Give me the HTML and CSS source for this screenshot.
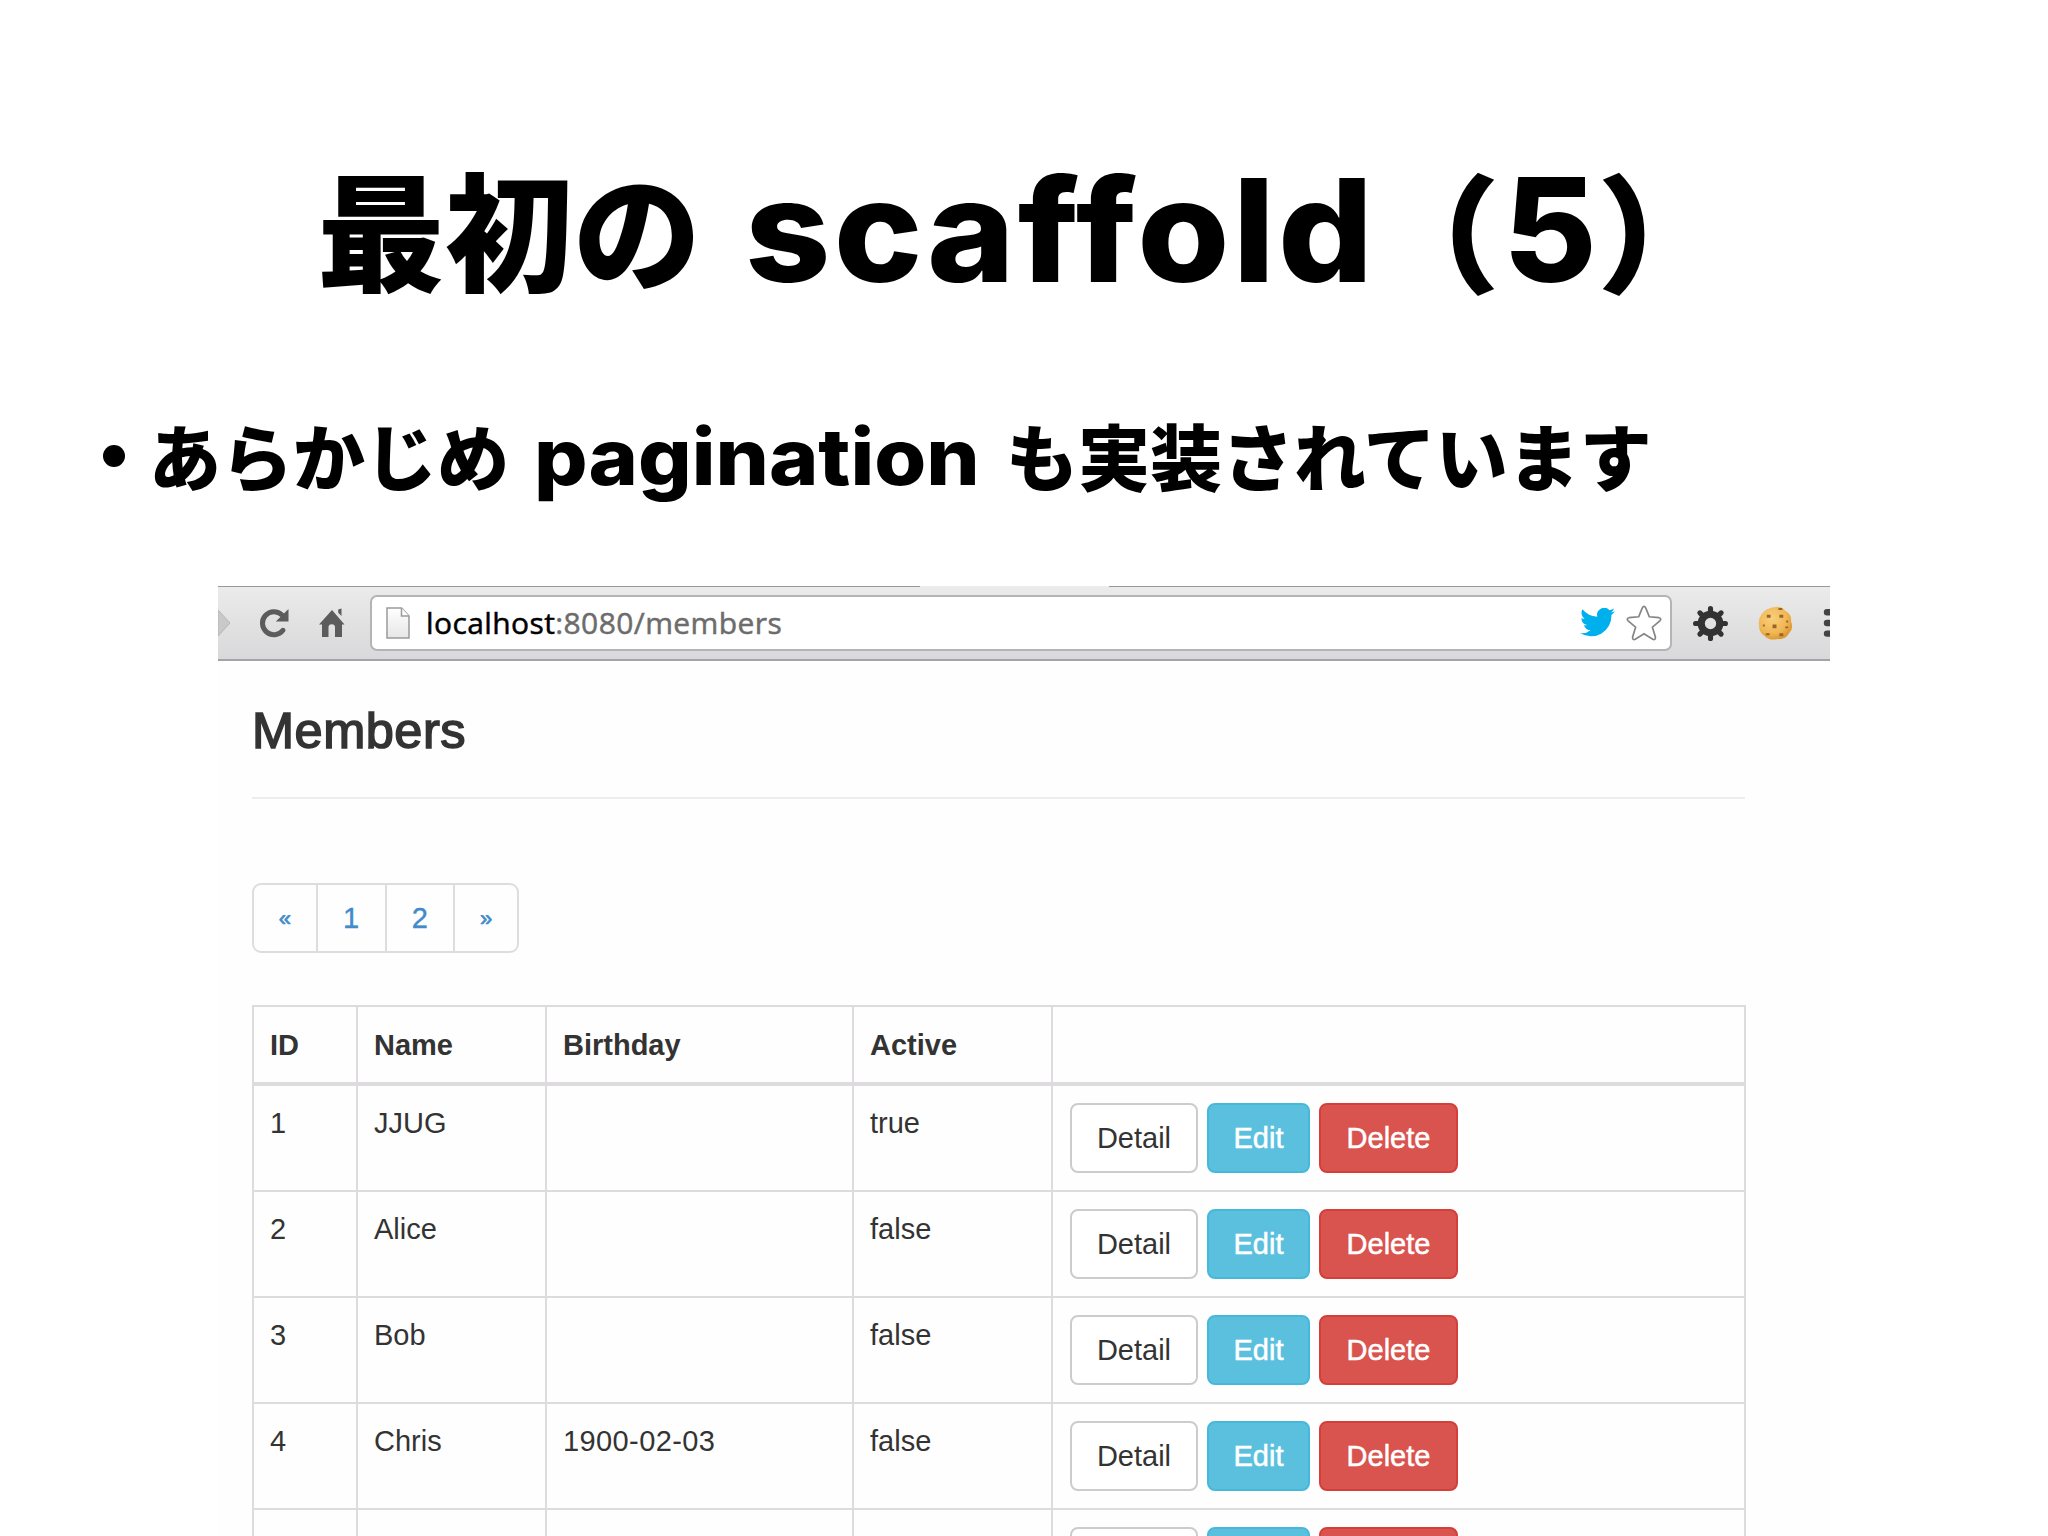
FILE: index.html
```html
<!DOCTYPE html>
<html lang="ja">
<head>
<meta charset="utf-8">
<title>最初の scaffold（5）</title>
<link rel="stylesheet" href="styles.css">
</head>
<body>
<main class="slide">
  <h1 class="title"><span class="title-jp">最初の</span><span class="title-en">scaffold</span><span class="paren">（</span><span class="title-num">5</span><span class="paren">）</span></h1>
  <ul class="bullets">
    <li class="bullet"><span class="dot"></span><span class="kana kana-lead">あらかじめ</span><span class="latin">pagination</span><span class="kana">も実装されています</span></li>
  </ul>
  <section class="browser">
    <header class="toolbar">
      <svg class="forward" viewBox="0 0 13 30"><path d="M0 2 12 15 0 28Z" fill="#c9c9c9" stroke="#b5b5b5"/></svg>
      <svg class="reload" viewBox="0 0 30 30"><path d="M24 22.300A11.500 11.500 0 1 1 23 7" fill="none" stroke="#5c5c5c" stroke-width="5" stroke-linecap="round"/><path d="M29.500 1V13.600H16.800Z" fill="#5c5c5c"/></svg>
      <svg class="home" viewBox="0 0 26 30"><path d="M13 2 0 16.500H3V29H9.500V19.500a3 3 0 0 1 6.500 0V29H23V16.500H25.500L13 2ZM19.200 1.600 22.500 .500V8L19.200 4.800Z" fill="#5c5c5c"/></svg>
      <div class="address">
        <svg class="page-icon" viewBox="0 0 24 32"><defs><linearGradient id="sheet" x2="0" y2="1"><stop stop-color="#fff"/><stop offset="1" stop-color="#e6e6e6"/></linearGradient></defs><path d="M1 1H15.500L23 9V31H1Z" fill="url(#sheet)" stroke="#9b9b9b" stroke-width="1.500"/><path d="M15.500 1V9H23" fill="#fff" stroke="#9b9b9b" stroke-width="1.500"/></svg>
        <span class="url"><b class="host">localhost</b>:8080/members</span>
        <svg class="bird" viewBox="1 3 22 18"><path d="M23 4.960a9 9 0 0 1-2.600.710 4.500 4.500 0 0 0 1.980-2.490 9 9 0 0 1-2.860 1.090 4.500 4.500 0 0 0-7.680 4.100A12.800 12.800 0 0 1 2.560 3.670a4.500 4.500 0 0 0 1.390 6.010 4.500 4.500 0 0 1-2.040-.560v.060a4.500 4.500 0 0 0 3.610 4.410 4.500 4.500 0 0 1-2.030.080 4.500 4.500 0 0 0 4.210 3.130A9 9 0 0 1 1 18.660 12.800 12.800 0 0 0 20.740 7.290 9 9 0 0 0 23 4.960Z" fill="#00b0ed"/></svg>
        <svg class="star" viewBox="0 0 36 36"><path d="M16.200 3.200Q18 -.500 19.800 3.200L23.300 11.800 33 12.700Q36 13.500 33.800 15.800L26.400 22.200 29.400 32Q29.600 35.400 26.700 34.300L18 28.800 9.300 34.300Q6.400 35.400 6.600 32L9.600 22.200 2.200 15.800Q0 13.500 3 12.700L12.700 11.800Z" fill="#fff" stroke="#858585" stroke-width="1.700"/></svg>
      </div>
      <svg class="gear" viewBox="-17 -17 34 34"><g fill="none" stroke="#333"><circle r="9" stroke-width="7"/><path d="M0-11V-14.500M0 11V14.500M-11 0H-14.500M11 0H14.500M-8-8-10.300-10.300M8 8 10.300 10.300M8-8 10.300-10.300M-8 8-10.300 10.300" stroke-width="5" stroke-linecap="round"/></g></svg>
      <svg class="cookie" viewBox="0 0 36 36"><defs><radialGradient id="dough" cx=".4" cy=".35" r=".65"><stop stop-color="#f8cf7c"/><stop offset=".7" stop-color="#f1b654"/><stop offset="1" stop-color="#dc9a35"/></radialGradient></defs><path d="M18 1Q24 0 28 5 35 9 34 16 37 23 32 28 28 35 20 34 12 36 7 31 1 27 1 20 0 13 4 8 8 2 18 1Z" fill="url(#dough)"/><path d="M9 9h4v3H9ZM22 9h4v3H22ZM15 19h4v4H15ZM8 28h4v2H8ZM22 28h4v3H22ZM28 21h3v2H28ZM5 19h2v2H5ZM21 2h4v2H21ZM29 15h2v2H29Z" fill="#9a6428"/></svg>
      <svg class="menu" viewBox="0 0 7 28"><path d="M7 0H4a3.200 3.200 0 0 0 0 6.400H7ZM7 10.800H4a3.200 3.200 0 0 0 0 6.400H7ZM7 21.400H4a3.200 3.200 0 0 0 0 6.400H7Z" fill="#444"/></svg>
      <span class="tab-foot"></span>
    </header>
    <div class="page">
      <h2 class="heading">Members</h2>
      <nav class="pager"><a class="step">«</a><a class="num">1</a><a class="num">2</a><a class="step">»</a></nav>
      <table class="members">
        <colgroup><col class="c-id"><col class="c-name"><col class="c-birth"><col class="c-active"><col></colgroup>
        <thead><tr><th>ID</th><th>Name</th><th>Birthday</th><th>Active</th><th></th></tr></thead>
        <tbody>
          <tr><td>1</td><td>JJUG</td><td></td><td>true</td><td><div class="actions"><a class="btn detail">Detail</a><a class="btn edit">Edit</a><a class="btn delete">Delete</a></div></td></tr>
          <tr><td>2</td><td>Alice</td><td></td><td>false</td><td><div class="actions"><a class="btn detail">Detail</a><a class="btn edit">Edit</a><a class="btn delete">Delete</a></div></td></tr>
          <tr><td>3</td><td>Bob</td><td></td><td>false</td><td><div class="actions"><a class="btn detail">Detail</a><a class="btn edit">Edit</a><a class="btn delete">Delete</a></div></td></tr>
          <tr><td>4</td><td>Chris</td><td class="date">1900-02-03</td><td>false</td><td><div class="actions"><a class="btn detail">Detail</a><a class="btn edit">Edit</a><a class="btn delete">Delete</a></div></td></tr>
          <tr><td></td><td></td><td></td><td></td><td><div class="actions"><a class="btn detail"></a><a class="btn edit"></a><a class="btn delete"></a></div></td></tr>
        </tbody>
      </table>
    </div>
  </section>
</main>
</body>
</html>
```
FILE: styles.css
```css
* { box-sizing: border-box; }
body { margin: 0; background: #fff; }
.slide {
  width: 2048px; height: 1536px; overflow: hidden;
  display: flex; flex-direction: column;
  color: #000;
}
.title, .bullet { font-family: Inter, "Noto Sans CJK JP", sans-serif; font-weight: 900; white-space: nowrap; }
.title {
  flex: none;
  margin: 0; padding: 132px 0 0 317px; height: 398px;
  display: flex; align-items: baseline;
  font-size: 128px; line-height: 190px;
}
.title-jp { width: 428px; font-family: "Noto Sans CJK JP", sans-serif; }
.title-en {
  width: 628px; font-size: 143px; font-weight: 800; letter-spacing: 3px;
  font-variant-ligatures: none;
  transform: scaleX(1.043); transform-origin: left;
}
.paren { width: 128px; font-size: 125px; font-family: "Noto Sans CJK JP", sans-serif; font-weight: 900; -webkit-text-stroke: 2px #000; }
.title-num { width: 98px; font-size: 144px; font-weight: 800; text-align: center; }
.bullets { flex: none; margin: 0; padding: 0 0 0 103px; height: 188px; list-style: none; }
.bullet { display: flex; align-items: baseline; font-size: 72px; line-height: 112px; }
.dot { width: 22px; height: 22px; margin-right: 24px; border-radius: 50%; background: #000; transform: translateY(-18px); }
.kana { font-family: "Noto Sans CJK JP", sans-serif; }
.kana-lead { width: 385px; }
.latin { width: 472px; font-size: 78px; font-weight: 800; transform: scaleX(1.078); transform-origin: left; }
.browser { flex: none; width: 1612px; margin-left: 218px; background: #fefefe; }
.toolbar {
  position: relative; height: 75px; display: flex; align-items: center;
  border-top: 1px solid #999; border-bottom: 2px solid #a5a3a5;
  background: linear-gradient(#ebebeb, #d9d8da);
}
.forward { width: 13px; height: 30px; }
.reload { width: 30px; height: 30px; margin-left: 28px; }
.home { width: 26px; height: 30px; margin-left: 30px; }
.address {
  width: 1302px; height: 56px; margin: 0 0 1px 25px; padding: 0 8px 0 14px;
  display: flex; align-items: center;
  border: 2px solid #b4b4b4; border-radius: 7px; background: #fff;
}
.page-icon { width: 24px; height: 32px; }
.url { margin-left: 16px; flex: 1; font: 30px/40px "Open Sans", sans-serif; letter-spacing: .4px; color: #6c6c6c; -webkit-text-stroke: .5px; }
.host { color: #000; font-weight: 400; }
.bird { width: 35px; height: 29px; }
.star { width: 36px; height: 36px; margin-left: 11px; }
.gear { width: 35px; height: 35px; margin-left: 21px; }
.cookie { width: 35px; height: 35px; margin-left: 30px; }
.menu { width: 7px; height: 28px; margin-left: auto; }
.tab-foot { position: absolute; left: 702px; top: -1px; width: 189px; height: 1px; background: #ebebeb; }
.page { padding: 0 85px 0 34px; color: #333; font: 29px/41.500px "Liberation Sans", Arial, sans-serif; }
.heading {
  margin: 0; height: 138px; padding-top: 42px;
  border-bottom: 2px solid #ededed;
  font-size: 50.500px; line-height: 56px; font-weight: 400; letter-spacing: .5px; -webkit-text-stroke: 1.600px #333;
}
.pager {
  width: 267px; height: 70px; margin: 84px 0 52px; display: flex;
  border: 2px solid #ddd; border-radius: 9px;
  color: #428bca; line-height: 67px; text-align: center;
}
.pager a + a { border-left: 2px solid #ddd; }
.step { flex: 64; font-size: 22px; -webkit-text-stroke: .7px; }
.num { flex: 69; -webkit-text-stroke: .4px; }
.members { width: 1494px; table-layout: fixed; border-collapse: collapse; }
.c-id { width: 104px; } .c-name { width: 189px; } .c-birth { width: 307px; } .c-active { width: 199px; }
th, td { padding: 17px 16px; border: 2px solid #dddbde; text-align: left; vertical-align: top; }
th { height: 78px; padding: 18px 16px 14px; border-bottom-width: 4px; }
td { height: 106px; }
.date { letter-spacing: .4px; }
.actions { display: flex; gap: 9px; padding-left: 1px; }
.btn { height: 70px; border: 2px solid; border-radius: 8px; line-height: 66px; text-align: center; }
.detail { width: 128px; border-color: #ccc; background: #fff; }
.edit { width: 103px; border-color: #46b8da; background: #5bc0de; color: #fff; -webkit-text-stroke: .5px #fff; }
.delete { width: 139px; border-color: #d43f3a; background: #d9534f; color: #fff; -webkit-text-stroke: .5px #fff; }
```
